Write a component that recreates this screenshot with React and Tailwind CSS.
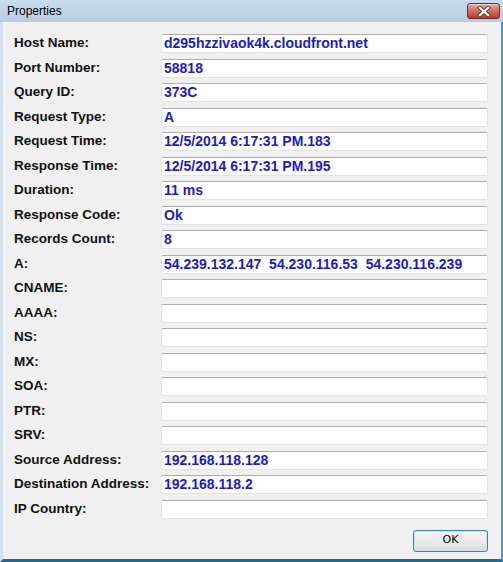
import React from 'react';

const rows = [
  ['Host Name:', 'd295hzzivaok4k.cloudfront.net'],
  ['Port Number:', '58818'],
  ['Query ID:', '373C'],
  ['Request Type:', 'A'],
  ['Request Time:', '12/5/2014 6:17:31 PM.183'],
  ['Response Time:', '12/5/2014 6:17:31 PM.195'],
  ['Duration:', '11 ms'],
  ['Response Code:', 'Ok'],
  ['Records Count:', '8'],
  ['A:', '54.239.132.147  54.230.116.53  54.230.116.239'],
  ['CNAME:', ''],
  ['AAAA:', ''],
  ['NS:', ''],
  ['MX:', ''],
  ['SOA:', ''],
  ['PTR:', ''],
  ['SRV:', ''],
  ['Source Address:', '192.168.118.128'],
  ['Destination Address:', '192.168.118.2'],
  ['IP Country:', ''],
];

function CloseButton() {
  return (
    <div className="w-[33px] h-[16px] rounded-[3px] border border-[#6b2a24] bg-gradient-to-b from-[#e6a79a] via-[#d0705e] to-[#b83a26] flex items-center justify-center shadow-[inset_0_1px_0_rgba(255,255,255,0.5)]">
      <svg width="14" height="11" viewBox="0 0 14 11">
        <path d="M3 2 L11 9 M11 2 L3 9" stroke="#5a3a36" strokeWidth="4" strokeLinecap="square" />
        <path d="M3 2 L11 9 M11 2 L3 9" stroke="#ffffff" strokeWidth="2.2" strokeLinecap="square" />
      </svg>
    </div>
  );
}

export default function App() {
  return (
    <div className="w-[503px] h-[562px] flex flex-col bg-[#f0f0f0] overflow-hidden" style={{ fontFamily: '"Liberation Sans", Arial, sans-serif' }}>
      {/* title bar */}
      <div className="h-[22px] shrink-0 flex items-center justify-between pl-[7px] pr-[3px] bg-gradient-to-b from-[#cadcef] to-[#b7cce4]">
        <span className="text-[12px] text-black">Properties</span>
        <CloseButton />
      </div>

      <div className="flex-1 flex flex-col border-l-[3px] border-l-[#d3e1ef] border-r-[2px] border-r-[#35a0e4] border-b-[3px] border-b-[#1f6a86] pl-[11px] pr-[13px] pt-[12px]">
        <div className="flex flex-col gap-[5.5px]">
          {rows.map(([label, value]) => (
            <div key={label} className="flex items-center h-[19px]">
              <div className="w-[147px] shrink-0 text-[13.5px] font-bold text-[#111]">{label}</div>
              <div className="flex-1 h-[19px] flex items-center pl-[2px] bg-white border border-[#e2e3ea] border-t-[#abadb3] rounded-[2px] text-[14px] font-bold text-[#1c1cc4] whitespace-pre overflow-hidden">
                {value}
              </div>
            </div>
          ))}
        </div>

        <div className="flex justify-end mt-[11px]">
          <button className="w-[75px] h-[22px] rounded-[3px] border border-[#3c7fb1] bg-gradient-to-b from-[#f4f4f4] via-[#ebebeb] to-[#d9d9d9] shadow-[inset_0_0_0_1px_#c6e6f8] text-[11px] text-black" style={{ fontFamily: '"DejaVu Sans", sans-serif' }}>
            OK
          </button>
        </div>
      </div>
    </div>
  );
}
